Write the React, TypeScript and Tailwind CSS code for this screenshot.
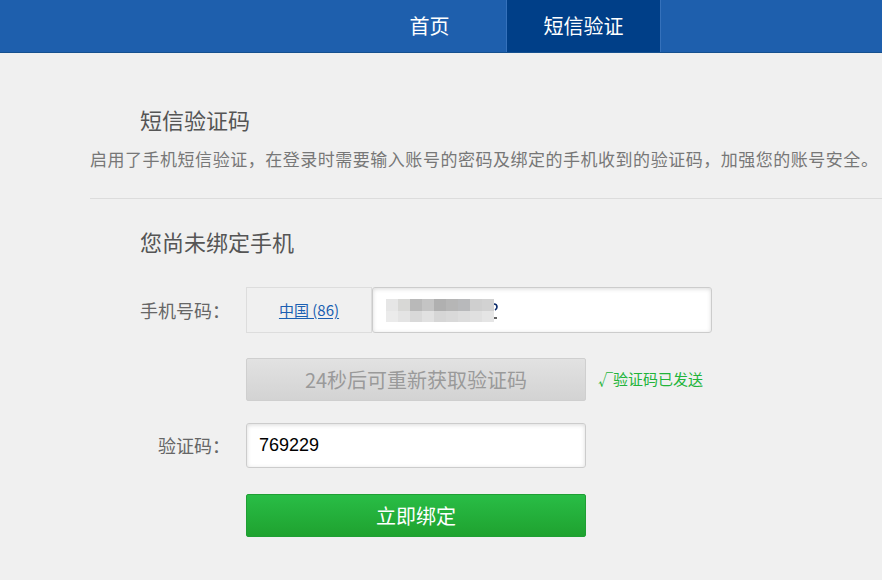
import React from 'react';

const cjk = { fontFamily: '"Microsoft YaHei", "Noto Sans CJK SC", "Liberation Sans", sans-serif' };

// pixelated blur covering the phone number
const blurTop = ['#e6e6e6', '#d8d8d6', '#b9b9b9', '#c4c4c4', '#b0b0b0', '#b6b6b6', '#b8b9bb', '#cfcfcf', '#d2d2d2'];
const blurBottom = ['#ebebeb', '#e4e4e4', '#d9d9d9', '#e1e1e1', '#d6d6d6', '#d9d9d9', '#dddddd', '#e0e0e0', '#e5e5e5'];

function PhoneBlur() {
  return (
    <div className="flex items-center">
      <div className="flex flex-col">
        <div className="flex">
          {blurTop.map((c, i) => (
            <div key={i} className="w-[12px] h-[12px]" style={{ backgroundColor: c }} />
          ))}
        </div>
        <div className="flex">
          {blurBottom.map((c, i) => (
            <div key={i} className="w-[12px] h-[11px]" style={{ backgroundColor: c }} />
          ))}
        </div>
      </div>
      {/* visible tail of the last digit */}
      <svg width="4" height="22" viewBox="0 0 4 22" className="block">
        <path d="M0 5 Q3 5 3 8 Q3 10 1 11" stroke="#0a2a6a" strokeWidth="1.6" fill="none" />
        <path d="M0 19 H3" stroke="#222" strokeWidth="1.4" />
      </svg>
    </div>
  );
}

export default function App() {
  return (
    <div className="w-[882px] h-[580px] overflow-hidden bg-[#f0f0f0]" style={cjk}>
      {/* Top nav */}
      <div className="h-[53px] bg-[#1e5fad] border-b border-[#15508f] flex">
        <div className="w-[353px]" />
        <div className="w-[153px] h-[52px] flex items-center justify-center text-white text-[20px]">首页</div>
        <div className="w-px h-[52px] bg-[#3571bb]" />
        <div className="w-[153px] h-[52px] flex items-center justify-center bg-[#003f88] text-white text-[20px]">短信验证</div>
        <div className="w-px h-[52px] bg-[#3571bb]" />
      </div>

      <div className="pl-[90px] pt-[51px]">
        <div className="pl-[50px] text-[22px] leading-[30px] text-[#555]">短信验证码</div>
        <div className="mt-[13px] text-[17px] tracking-[0.52px] leading-[24px] text-[#777] whitespace-nowrap">
          启用了手机短信验证，在登录时需要输入账号的密码及绑定的手机收到的验证码，加强您的账号安全。
        </div>
        <div className="mt-[27px] border-t border-[#dcdcdc]" />

        <div className="pl-[50px]">
          <div className="mt-[27px] text-[22px] leading-[30px] text-[#555]">您尚未绑定手机</div>

          {/* phone row */}
          <div className="mt-[31px] flex items-center">
            <div className="w-[90px] text-right text-[18px] text-[#666]">手机号码：</div>
            <div className="ml-[16px] w-[126px] h-[46px] border border-[#dddddd] bg-[#f0f0f0] flex items-center justify-center">
              <span className="text-[15px] text-[#1b5fb2] underline underline-offset-2">中国 (86)</span>
            </div>
            <div className="w-[340px] h-[46px] bg-white border border-[#cccccc] rounded-[3px] shadow-[inset_0_1px_4px_rgba(0,0,0,0.15)] flex items-center pl-[13px]">
              <PhoneBlur />
            </div>
          </div>

          {/* resend row */}
          <div className="mt-[25px] flex items-center">
            <div className="w-[90px]" />
            <div className="ml-[16px] w-[340px] h-[43px] rounded-[2px] border border-[#cfcfcf] bg-gradient-to-b from-[#e2e2e2] to-[#d3d3d3] flex items-center justify-center text-[20px] text-[#9a9a9a]">
              24秒后可重新获取验证码
            </div>
            <div className="ml-[12px] text-[15px] text-[#22b43a]">√验证码已发送</div>
          </div>

          {/* code row */}
          <div className="mt-[22px] flex items-center">
            <div className="w-[90px] text-right text-[18px] text-[#666]">验证码：</div>
            <div className="ml-[16px] w-[340px] h-[45px] bg-white border border-[#cccccc] rounded-[3px] shadow-[inset_0_1px_4px_rgba(0,0,0,0.15)] flex items-center pl-[12px]">
              <span className="text-[18px] text-black" style={{ fontFamily: '"Liberation Sans", sans-serif' }}>769229</span>
            </div>
          </div>

          {/* submit */}
          <div className="mt-[26px] flex">
            <div className="w-[90px]" />
            <div className="ml-[16px] w-[340px] h-[43px] rounded-[2px] border border-[#1f9f34] bg-gradient-to-b from-[#29bd46] to-[#1fa22f] flex items-center justify-center text-[20px] text-white">
              立即绑定
            </div>
          </div>
        </div>
      </div>
    </div>
  );
}
